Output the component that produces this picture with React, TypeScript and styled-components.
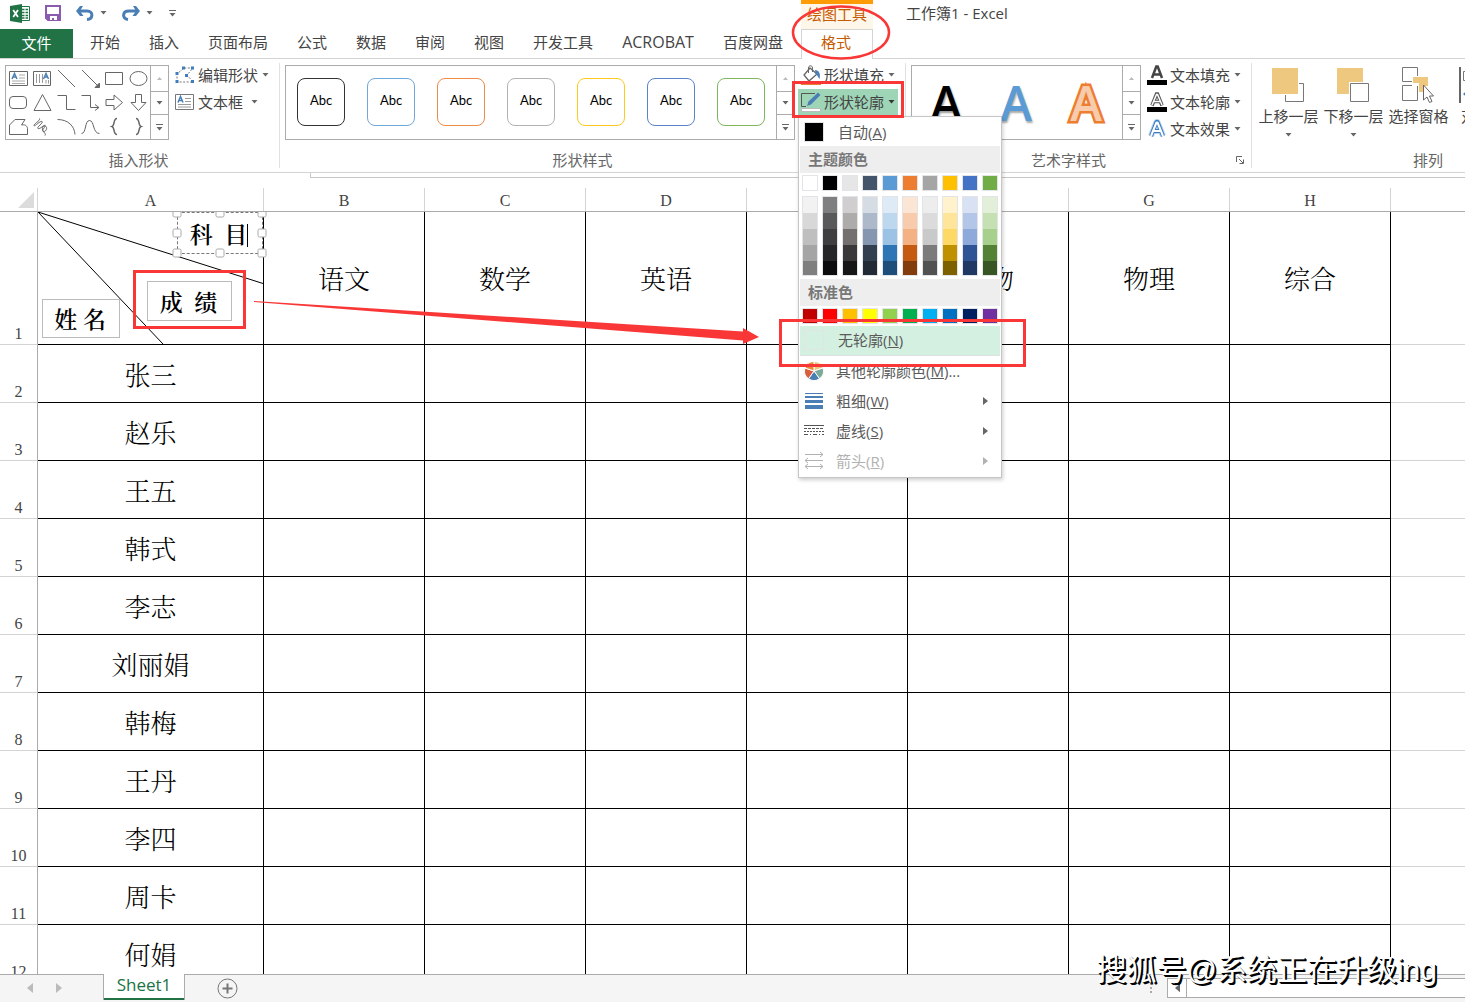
import React from 'react';
import styled, { createGlobalStyle, css } from 'styled-components';

const uiFont = `"Open Sans", "Noto Sans CJK SC", sans-serif`;
const sheetFont = `"Liberation Serif", "Noto Serif CJK SC", "Noto Sans CJK SC", serif`;

const GlobalStyle = createGlobalStyle`
  *, *::before, *::after { box-sizing: border-box; }
  body { margin: 0; background: #fff; font-family: ${uiFont}; }
  button { font: inherit; color: inherit; background: none; border: 0; padding: 0; margin: 0; }
  svg { display: block; flex: none; }
`;

const Window = styled.div`
  position: relative;
  display: flex;
  flex-direction: column;
  height: 100vh;
  overflow: hidden;
  font-size: 15px;
  line-height: 22px;
  color: #444;
  background: #fff;
`;

/* ---------- Title bar ---------- */

const TitleBar = styled.header`
  display: grid;
  grid-template-columns: 801px 72px 1fr;
  flex: none;
  height: 29px;
`;

const QuickAccess = styled.div`
  display: flex;
  align-items: center;
  gap: 15px;
  padding: 0 0 3px 10px;
`;

const QuickButton = styled.button`
  display: flex;
  align-items: center;
  gap: 6px;
`;

const ContextTitle = styled.div`
  border-top: 4px solid #ff9b05;
  background: #fff6ea;
  color: #c55a00;
  text-align: center;
  line-height: 20px;
  white-space: nowrap;
`;

const DocumentTitle = styled.div`
  padding: 2px 0 0 33px;
  white-space: nowrap;
`;

/* ---------- Ribbon tabs ---------- */

const TabRow = styled.nav`
  display: flex;
  flex: none;
  height: 30px;
  border-bottom: 1px solid #d4d4d4;
`;

const FileTab = styled.button`
  width: 73px;
  height: 29px;
  margin-right: 2px;
  padding-bottom: 2px;
  background: #217346;
  color: #fff;
`;

const Tab = styled.button<{ $active?: boolean; $latin?: boolean }>`
  padding: 0 14px 4px 15px;
  white-space: nowrap;
  font-size: ${(p) => (p.$latin ? '16px' : '15px')};
  ${(p) =>
    p.$active &&
    css`
      width: 72px;
      height: 30px;
      margin-left: 4px;
      padding: 0 2px 5px 0;
      border: 1px solid #d4d4d4;
      border-bottom: 0;
      background: #fff;
      color: #c55a00;
    `}
`;

/* ---------- Ribbon ---------- */

const Ribbon = styled.section`
  display: flex;
  flex: none;
  height: 114px;
  border-bottom: 1px solid #d4d4d4;
`;

const Group = styled.div`
  display: flex;
  flex-direction: column;
  flex: none;
  padding: 3px 7px 0 5px;
`;

const ArrangeGroup = styled(Group)`
  width: 352px;
  padding: 3px 4px 0;
`;

const Divider = styled.div`
  flex: none;
  width: 1px;
  margin: 4px 0;
  background: #e1e1e1;
`;

const GroupBody = styled.div`
  display: flex;
  height: 87px;
`;

const GroupLabel = styled.div<{ $inset?: number }>`
  display: flex;
  justify-content: center;
  align-items: center;
  padding-right: ${(p) => p.$inset ?? 0}px;
  color: #666;
`;

const LabelRow = styled.div`
  display: flex;
  align-items: center;
  & > :first-child { flex: 1; }
`;

const Gallery = styled.div`
  display: flex;
  height: 75px;
  margin-top: 3px;
  border: 1px solid #ababab;
`;

const ShapeGrid = styled.div`
  display: grid;
  grid-template-columns: repeat(6, 24px);
  grid-template-rows: repeat(3, 24px);
`;

const ShapeButton = styled.button`
  display: grid;
  place-items: center;
  padding-left: 1px;
`;

const StyleStrip = styled.div`
  display: flex;
  align-items: center;
  gap: 22px;
  padding: 0 11px 2px;
`;

const StyleTile = styled.button<{ $color: string }>`
  width: 48px;
  height: 48px;
  border: 1px solid ${(p) => p.$color};
  border-radius: 8px;
  font-family: Lato, sans-serif;
  font-size: 13px;
  line-height: 18px;
  color: #000;
  padding-bottom: 3px;
`;

const ArtStrip = styled.div`
  display: grid;
  grid-template-columns: repeat(3, 70px);
`;

const ArtButton = styled.button<{ $kind: 'black' | 'blue' | 'orange' }>`
  font-family: "Open Sans", sans-serif;
  font-size: 48px;
  font-weight: 600;
  line-height: 72px;
  padding-right: 2px;
  ${(p) => p.$kind === 'black' && css`color: #000; text-shadow: 1px 2px 2px #999;`}
  ${(p) => p.$kind === 'blue' && css`color: #5b9bd5; text-shadow: 1px 2px 2px #aaa;`}
  ${(p) =>
    p.$kind === 'orange' &&
    css`
      color: #f8cbad;
      -webkit-text-stroke: 5px #ed7d31;
      paint-order: stroke fill;
      stroke-linejoin: round;
    `}
`;

const ScrollColumn = styled.div`
  display: grid;
  grid-template-rows: 25px 23px 25px;
  width: 18px;
  border-left: 1px solid #ababab;
`;

const ScrollButton = styled.button`
  display: grid;
  place-items: center;
  & + & { border-top: 1px solid #ababab; }
`;

const SideColumn = styled.div`
  margin-left: 3px;
`;

const Anchor = styled.div`
  position: relative;
`;

const SideButton = styled.button<{ $pressed?: boolean }>`
  display: flex;
  align-items: center;
  height: 27px;
  padding: 0 3px 2px;
  white-space: pre;
  background: ${(p) => (p.$pressed ? '#9fd5b7' : 'transparent')};
  & > svg:first-child { margin-right: 3px; }
  & > svg:last-child { margin-left: 4px; }
`;

const LargeButton = styled.button<{ $narrow?: boolean }>`
  display: flex;
  flex: none;
  flex-direction: column;
  align-items: center;
  justify-content: flex-start;
  gap: 2px;
  width: ${(p) => (p.$narrow ? '50px' : '65px')};
  padding-top: 5px;
  white-space: nowrap;
  & > svg + svg { margin-top: 4px; }
`;

/* ---------- Outline menu ---------- */

const Menu = styled.div`
  position: absolute;
  z-index: 5;
  top: 100%;
  left: 0;
  width: 204px;
  padding: 0 1px 1px;
  border: 1px solid #c6c6c6;
  background: #fff;
  box-shadow: 1px 2px 4px rgba(0, 0, 0, 0.2);
`;

const MenuItem = styled.button<{ $selected?: boolean; $muted?: boolean; $first?: boolean }>`
  display: flex;
  align-items: center;
  width: 100%;
  height: ${(p) => (p.$first ? '29px' : '30px')};
  padding: ${(p) => (p.$first ? '1px 12px 0 4px' : '0 12px 1px 4px')};
  border-bottom: ${(p) => (p.$selected ? '1px solid #e1e1e1' : '0')};
  white-space: nowrap;
  background: ${(p) => (p.$selected ? '#d3f0e0' : 'transparent')};
  color: ${(p) => (p.$muted ? '#b1b1b1' : '#5a5a5a')};
  & > svg:last-child { margin-left: auto; }
`;

const MenuIcon = styled.span<{ $wide?: boolean }>`
  flex: none;
  width: ${(p) => (p.$wide ? '34px' : '32px')};
`;

const Chip = styled.span<{ $color: string }>`
  display: block;
  width: 20px;
  height: 20px;
  border: 1px solid #e2e4e7;
  background: ${(p) => p.$color};
`;

const MenuHeading = styled.div`
  height: 27px;
  padding-left: 8px;
  line-height: 26px;
  font-weight: 600;
  color: #777;
  background: #eee;
`;

const SwatchRow = styled.div`
  display: grid;
  grid-template-columns: repeat(10, 16px);
  column-gap: 4px;
  padding: 2px;
`;

const ShadeRow = styled(SwatchRow)`
  padding: 3px 2px;
`;

const Swatch = styled.button<{ $color: string }>`
  height: 16px;
  border: 1px solid #e2e4e7;
  background: ${(p) => p.$color};
`;

const ShadeStack = styled.div`
  display: grid;
  grid-template-rows: repeat(5, 16px);
  border: 1px solid #e2e4e7;
  height: 80px;
  overflow: hidden;
`;

const Shade = styled.button<{ $color: string }>`
  background: ${(p) => p.$color};
`;

/* ---------- Worksheet ---------- */

const FormulaEdge = styled.div`
  flex: none;
  height: 5px;
  margin-left: 310px;
  border-left: 1px solid #c6c6c6;
  border-bottom: 1px solid #c6c6c6;
`;

const SheetArea = styled.main`
  flex: 1;
  min-height: 0;
  overflow: hidden;
`;

const Grid = styled.table`
  width: 100%;
  table-layout: fixed;
  border-collapse: separate;
  border-spacing: 0;
  font-family: ${sheetFont};
`;

const ColumnHead = styled.th`
  height: 34px;
  padding: 12px 0 0;
  border-bottom: 1px solid #ababab;
  border-right: 1px solid transparent;
  border-image: linear-gradient(#fff 30%, #d4d4d4 31%, #d4d4d4 97%, #ababab 97%) 1;
  font-size: 16px;
  font-weight: 400;
  line-height: 20px;
  &:last-child { border-right: 0; border-image: none; }
`;

const Corner = styled(ColumnHead)`
  padding: 14px 3px 3px 18px;
`;

const RowHead = styled.th<{ $tall?: boolean }>`
  height: ${(p) => (p.$tall ? '133px' : '58px')};
  border-right: 1px solid #ababab;
  border-bottom: 1px solid #d4d4d4;
  padding: 0 0 1px;
  font-size: 16px;
  font-weight: 400;
  line-height: 18px;
  vertical-align: bottom;
`;

const Cell = styled.td<{ $outer?: boolean }>`
  position: relative;
  padding: 6px 0 0;
  border-right: ${(p) => (p.$outer ? '0' : '1px solid #000')};
  border-bottom: 1px solid ${(p) => (p.$outer ? '#d4d4d4' : '#000')};
  font-size: 26px;
  font-weight: 300;
  line-height: 34px;
  text-align: center;
  color: #000;
`;

const DrawingLayer = styled.svg`
  position: absolute;
  inset: 0;
`;

const TextShape = styled.div<{ $x: number; $y: number; $w: number; $h: number; $editing?: boolean }>`
  position: absolute;
  left: ${(p) => p.$x}px;
  top: ${(p) => p.$y}px;
  width: ${(p) => p.$w}px;
  height: ${(p) => p.$h}px;
  display: flex;
  align-items: center;
  justify-content: center;
  padding: 5px 2px 0 0;
  border: 1px ${(p) => (p.$editing ? 'dashed #777' : 'solid #bbb')};
  background: #fff;
  font-size: 23px;
  font-weight: 600;
  white-space: pre;
`;

const Caret = styled.span`
  width: 1px;
  height: 23px;
  background: #000;
`;

/* ---------- Sheet bar ---------- */

const SheetBar = styled.footer`
  display: flex;
  flex: none;
  height: 28px;
  background: #f5f5f5;
  box-shadow: inset 0 1px 0 #ababab;
`;

const SheetNav = styled.div`
  display: flex;
  align-items: center;
  gap: 23px;
  width: 103px;
  padding-left: 27px;
`;

const SheetTab = styled.button`
  width: 82px;
  height: 26px;
  border: 1px solid #ababab;
  border-width: 0 1px;
  box-shadow: inset 0 -2px 0 #217346;
  background: #fff;
  color: #217346;
  font-size: 17px;
  line-height: 20px;
  padding-bottom: 4px;
`;

const AddSheet = styled.button`
  margin-left: 32px;
`;

const ScrollArea = styled.div`
  display: flex;
  align-items: center;
  gap: 14px;
  width: 316px;
  margin-left: auto;
`;

const ScrollTrack = styled.div`
  display: flex;
  flex: 1;
  height: 20px;
  border: 1px solid #ababab;
  border-right: 0;
  background: #fff;
`;

const ScrollLeft = styled.button`
  display: grid;
  place-items: center;
  width: 19px;
  border-right: 1px solid #ababab;
`;

/* ---------- Overlays ---------- */

const Annotations = styled.svg`
  position: absolute;
  z-index: 10;
  inset: 0;
  pointer-events: none;
`;

const Watermark = styled.div`
  position: absolute;
  z-index: 11;
  right: 28px;
  bottom: 10px;
  font-family: "Liberation Sans", "Noto Sans CJK SC", sans-serif;
  font-size: 30px;
  line-height: 44px;
  color: #fff;
  text-shadow: 1px 1px 0 #000, 2px 2px 0 #000;
  white-space: nowrap;
`;

/* ---------- Icons ---------- */

const Down = ({ color = '#666' }: { color?: string }) => (
  <svg width="7" height="4" viewBox="0 0 7 4"><path d="M0.500 0h6L3.500 3.500z" fill={color} /></svg>
);

const Right = ({ color = '#666' }: { color?: string }) => (
  <svg width="5" height="8" viewBox="0 0 5 8"><path d="M0 0v8L5 4z" fill={color} /></svg>
);

const Left = ({ color = '#bbb', size = 6 }: { color?: string; size?: number }) => (
  <svg width={size} height="10" viewBox="0 0 6 10"><path d="M6 0v10L0 5z" fill={color} /></svg>
);

const More = () => (
  <svg width="9" height="7" viewBox="0 0 9 7">
    <path d="M1 0.5h7" stroke="#666" /><path d="M1.5 3h6L4.5 6.5z" fill="#666" />
  </svg>
);

const ExcelIcon = () => (
  <svg width="20" height="19" viewBox="0 0 20 19">
    <path d="M10 2.5h9.5v14H10z" fill="#fff" stroke="#217346" />
    <path d="M12 5.5h2.5M15.5 5.5H18M12 8.5h2.5M15.5 8.5H18M12 11.5h2.5M15.5 11.5H18M12 14h2.5M15.5 14H18" stroke="#217346" strokeWidth="1.5" />
    <path d="M0 2L12 0v19L0 17z" fill="#217346" />
    <path d="M3.2 6l4.8 7M8 6l-4.8 7" stroke="#fff" strokeWidth="1.8" />
  </svg>
);

const SaveIcon = () => (
  <svg width="16" height="16" viewBox="0 0 16 16">
    <path d="M1 1h14v14H3l-2-2z" fill="#fff" stroke="#8b5bb0" strokeWidth="2" />
    <path d="M2 9h12v6H2z" fill="#8b5bb0" />
    <path d="M5 11h7v4h-3v-2H7v2H5z" fill="#fff" />
  </svg>
);

const UndoIcon = () => (
  <svg width="18" height="15" viewBox="0 0 18 15">
    <path d="M2 5h9c7 0 6 8 0 8.500" fill="none" stroke="#4a7fb5" strokeWidth="3" />
    <path d="M7 0H4L0 5l4 5h3.500L4 5z" fill="#4a7fb5" />
  </svg>
);

const RedoIcon = () => (
  <svg width="18" height="15" viewBox="0 0 18 15">
    <path d="M16 5H7c-7 0-7 7.500-1 8.500" fill="none" stroke="#4a7fb5" strokeWidth="3" />
    <path d="M11 0h3l4 5-4 5h-3.500L14 5z" fill="#4a7fb5" />
  </svg>
);

const TextBoxIcon = () => (
  <svg width="20" height="16" viewBox="0 0 20 16">
    <path d="M0.5 0.500h18v15h-18z" fill="#fff" stroke="#777" />
    <path d="M10 4.500h6M10 7.500h6M3 10.500h13M3 13h13" stroke="#999" />
    <path d="M3 8.500L5.500 2.500 8 8.500M4 6.500h3" fill="none" stroke="#4a7fb5" strokeWidth="1.500" />
  </svg>
);

const shapePaths: React.ReactNode[] = [
  <g key="t"><path d="M0.500 2.500h18v14h-18z" /><path d="M10 6h6M10 9h6M3 12h13M3 14.500h13" stroke="#aaa" /><path d="M3 10l2.500-5.500L8 10M4 8h3" stroke="#4a7fb5" strokeWidth="1.500" /></g>,
  <g key="v"><path d="M0.500 2.500h17v14h-17z" /><path d="M3.500 5v9M6.500 5v9M9.500 5v9M13 11v3.500M15.500 11v3.500" stroke="#999" /><path d="M10.500 10L13 4.500l2.500 5.500M11.500 8h3" stroke="#4a7fb5" strokeWidth="1.500" /></g>,
  <path key="l" d="M1 1l17 17" />,
  <g key="a"><path d="M1 1l17 17" /><path d="M18.500 14v4.500H14z" fill="#666" /></g>,
  <path key="r" d="M0.500 3.500h17v12h-17z" />,
  <ellipse key="e" cx="9.500" cy="9.500" rx="8.500" ry="7" />,
  <rect key="rr" x="0.500" y="3.500" width="17" height="12" rx="3.500" />,
  <path key="tr" d="M9.500 1.500L18 17.500H1z" />,
  <path key="el" d="M0.500 2.500h9v14h9" />,
  <g key="ea"><path d="M0.500 2.500h9v12h8" /><path d="M14 11.500l4 3-4 3" /></g>,
  <path key="ra" d="M1 6.500h8V2l8.500 7.500L9 17v-4.500H1z" />,
  <path key="da" d="M6.500 1.500v8H2l7.500 8 7.500-8h-4.500v-8z" />,
  <path key="fr" d="M0.500 17.500V8L6 2.500h10L12.500 8c5-1 6 2 6 4v5.500z" />,
  <path key="sc" d="M6 1.500c3 1-5 5-5 7s6-5 8-4-6 6-4 7 6-4 7-3-4 5-2 6 5-3 3-5-5 1-3 4 3 4 2 5" />,
  <path key="ar" d="M0.500 2.500c11 0 17 7 17.500 15" />,
  <path key="cu" d="M0.500 16.500c5 0 3-13 8-13s3 13 10 13" />,
  <path key="lb" strokeWidth="1.500" d="M12 1.500c-4 0-2 7-5 8 3 1 1 8 5 8" />,
  <path key="rb" strokeWidth="1.500" d="M7 1.500c4 0 2 7 5 8-3 1-1 8-5 8" />,
];

const EditShapeIcon = () => (
  <svg width="20" height="18" viewBox="0 0 20 18">
    <path d="M2 16V8l7-6h9l-6 7 6 7z" fill="none" stroke="#777" strokeDasharray="2 1.500" />
    <path d="M7 0.500h3v3H7zM16 0.500h3v3h-3zM0.500 6h3v3h-3zM10 8h3v3h-3zM0.500 14h3v3h-3zM16 14h3v3h-3z" fill="#3f7dbf" />
  </svg>
);

const FillIcon = () => (
  <svg width="20" height="20" viewBox="0 0 20 20">
    <path d="M9 3l7 6-8 7-5-6z" fill="#fff" stroke="#666" strokeWidth="1.300" />
    <path d="M7.500 8V3c0-3 4-3 4 0v4" fill="none" stroke="#666" />
    <path d="M14 5c4 0 6 4 4.500 9-1-1-2-4-4-5z" fill="#4a7fb5" />
    <path d="M0 16h20v4H0z" fill="#ed7d31" />
  </svg>
);

const OutlineIcon = () => (
  <svg width="20" height="20" viewBox="0 0 20 20">
    <path d="M14 1.500H0.500v13H5" fill="none" stroke="#555" />
    <path d="M6 14l1.500-4.500L17 0.500l2.500 2.500L10 12.500z" fill="#4a7fb5" />
    <path d="M0.500 16.500h19v3H0.500z" fill="#fff" stroke="#bbb" />
  </svg>
);

const LetterA = ({ kind }: { kind: 'fill' | 'outline' | 'effect' }) => (
  <svg width="20" height="20" viewBox="0 0 20 20">
    {kind === 'fill' && <path d="M5 13L9.300 1.500h1.400L15 13M6.500 9.500h7" fill="none" stroke="#444" strokeWidth="2.500" />}
    {kind === 'outline' && (
      <g fill="none">
        <path d="M5 13.500L9.500 2h1L15 13.500M6.500 9.500h7" stroke="#555" strokeWidth="3.500" />
        <path d="M5 13L9.500 2.500h1L15 13M6.500 9.500h7" stroke="#fff" strokeWidth="1.500" />
      </g>
    )}
    {kind === 'effect' && (
      <g fill="none" strokeLinejoin="round">
        <path d="M4 17L9.500 3h1L16 17M6 12h8" stroke="#b5d3f0" strokeWidth="6" />
        <path d="M4 17L9.500 3h1L16 17M6 12h8" stroke="#3f7dbf" strokeWidth="4" />
        <path d="M4 17L9.500 3.500h1L16 17M6 12h8" stroke="#fff" strokeWidth="2" />
      </g>
    )}
    {kind !== 'effect' && <path d="M0 15h20v5H0z" fill="#000" />}
  </svg>
);

const ForwardIcon = () => (
  <svg width="36" height="36" viewBox="0 0 36 36">
    <path d="M14.500 16.500h18v18h-18z" fill="#fff" stroke="#777" />
    <path d="M0 0h28v28H0z" fill="#fff" /><path d="M1 1h26v26H1z" fill="#edc87e" />
  </svg>
);

const BackwardIcon = () => (
  <svg width="36" height="36" viewBox="0 0 36 36">
    <path d="M1 1h26v26H1z" fill="#edc87e" />
    <path d="M13 15h20v20H13z" fill="#fff" /><path d="M14.500 16.500h18v18h-18z" fill="#fff" stroke="#777" />
  </svg>
);

const SelectionIcon = () => (
  <svg width="36" height="36" viewBox="0 0 36 36">
    <path d="M1.500 0.500h15v14h-15zM1.500 18.500h15v15h-15z" fill="#fff" stroke="#777" />
    <path d="M11 9h18v10H11z" fill="#fff" /><path d="M12 10h15v9h-5v6h-4v-9h-6z" fill="#edc87e" />
    <path d="M22.500 18v15l3.500-3 2.500 5.500 2.500-1-2.500-5.500h4z" fill="#fff" stroke="#666" />
  </svg>
);

const AlignIcon = () => (
  <svg width="34" height="36" viewBox="0 0 34 36">
    <path d="M1 0v36" stroke="#666" strokeWidth="2" />
    <path d="M4.500 4.500h15v9h-15z" fill="#fff" stroke="#777" />
    <path d="M4 27l6-5v3h12v4H10v3z" fill="#3f7dbf" />
  </svg>
);

const PaletteIcon = () => (
  <svg width="20" height="20" viewBox="0 0 20 20">
    <g stroke="#fff">
      <path d="M10 10V0.500A9.500 9.500 0 0 1 19 7z" fill="#ecc27d" />
      <path d="M10 10l9-3a9.500 9.500 0 0 1-3.500 10.700z" fill="#7caa9a" />
      <path d="M10 10l5.500 7.700a9.500 9.500 0 0 1-11 0z" fill="#4a7fb5" />
      <path d="M10 10l-5.500 7.700A9.500 9.500 0 0 1 1 7z" fill="#d75f3f" />
      <path d="M10 10L1 7a9.500 9.500 0 0 1 9-6.500z" fill="#e58d3a" />
    </g>
  </svg>
);

const WeightIcon = () => (
  <svg width="20" height="18" viewBox="0 0 20 18">
    <path d="M1 1h18v1H1zM1 4h18v2H1zM1 8h18v3H1zM1 13h18v4H1z" fill="#4a7fb5" />
  </svg>
);

const DashIcon = () => (
  <svg width="20" height="14" viewBox="0 0 20 14">
    <path d="M0 1.500h20" stroke="#555" />
    <path d="M0 4.500h20" stroke="#555" strokeDasharray="3 1" />
    <path d="M0 7.500h20" stroke="#555" strokeDasharray="2 1" />
    <path d="M0 10.500h20" stroke="#555" strokeDasharray="4 2 1 2" />
  </svg>
);

const ArrowsIcon = () => (
  <svg width="20" height="20" viewBox="0 0 20 20">
    <path d="M1 3.500h18M16 1l3 2.500L16 6M1 9.500h18M4 7l-3 2.500L4 12M1 15.500h18M4 13l-3 2.500L4 18M16 13l3 2.500-3 2.500" fill="none" stroke="#b1b1b1" />
  </svg>
);

/* ---------- Data ---------- */

const tabs = ['开始', '插入', '页面布局', '公式', '数据', '审阅', '视图', '开发工具', 'ACROBAT', '百度网盘'];
const tileColors = ['#333', '#70a8da', '#ef8b49', '#b2b2b2', '#ffc91f', '#5a83cb', '#7fb75f'];
const themeColors = ['#ffffff', '#000000', '#e7e6e6', '#44546a', '#5b9bd5', '#ed7d31', '#a5a5a5', '#ffc000', '#4472c4', '#70ad47'];
const shades = [
  ['#f2f2f2', '#d8d8d8', '#bfbfbf', '#a5a5a5', '#7f7f7f'],
  ['#7f7f7f', '#595959', '#3f3f3f', '#262626', '#0c0c0c'],
  ['#d0cece', '#aeabab', '#757070', '#3a3838', '#171616'],
  ['#d6dce4', '#adb9ca', '#8496b0', '#323f4f', '#222a35'],
  ['#deebf6', '#bdd7ee', '#9cc3e5', '#2e75b5', '#1e4e79'],
  ['#fbe5d5', '#f7cbac', '#f4b183', '#c55a11', '#833c0b'],
  ['#ededed', '#dbdbdb', '#c9c9c9', '#7b7b7b', '#525252'],
  ['#fff2cc', '#fee599', '#ffd965', '#bf9000', '#7f6000'],
  ['#d9e2f3', '#b4c6e7', '#8eaadb', '#2f5496', '#1f3864'],
  ['#e2efd9', '#c5e0b3', '#a8d08d', '#538135', '#375623'],
];
const standardColors = ['#c00000', '#ff0000', '#ffc000', '#ffff00', '#92d050', '#00b050', '#00b0f0', '#0070c0', '#002060', '#7030a0'];
const columns = ['A', 'B', 'C', 'D', 'E', 'F', 'G', 'H'];
const subjects = ['语文', '数学', '英语', '', '生物', '物理', '综合'];
const students = ['张三', '赵乐', '王五', '韩式', '李志', '刘丽娟', '韩梅', '王丹', '李四', '周卡', '何娟'];

/* ---------- Parts ---------- */

const GalleryScroll = () => (
  <ScrollColumn>
    <ScrollButton aria-label="上一行"><svg width="5" height="3"><path d="M0 3h5L2.500 0z" fill="#bbb" /></svg></ScrollButton>
    <ScrollButton aria-label="下一行"><Down /></ScrollButton>
    <ScrollButton aria-label="其他"><More /></ScrollButton>
  </ScrollColumn>
);

const OutlineMenu = () => (
  <Menu>
    <MenuItem $first><MenuIcon $wide><Chip $color="#000" /></MenuIcon>自动(<u>A</u>)</MenuItem>
    <MenuHeading>主题颜色</MenuHeading>
    <SwatchRow>{themeColors.map((c) => <Swatch key={c} $color={c} aria-label={c} />)}</SwatchRow>
    <ShadeRow>
      {shades.map((stack, i) => (
        <ShadeStack key={i}>{stack.map((c) => <Shade key={c} $color={c} aria-label={c} />)}</ShadeStack>
      ))}
    </ShadeRow>
    <MenuHeading>标准色</MenuHeading>
    <SwatchRow>{standardColors.map((c) => <Swatch key={c} $color={c} aria-label={c} />)}</SwatchRow>
    <MenuItem $selected><MenuIcon $wide><Chip $color="transparent" /></MenuIcon>无轮廓(<u>N</u>)</MenuItem>
    <MenuItem><MenuIcon><PaletteIcon /></MenuIcon>其他轮廓颜色(<u>M</u>)...</MenuItem>
    <MenuItem><MenuIcon><WeightIcon /></MenuIcon>粗细(<u>W</u>)<Right /></MenuItem>
    <MenuItem><MenuIcon><DashIcon /></MenuIcon>虚线(<u>S</u>)<Right /></MenuItem>
    <MenuItem $muted disabled><MenuIcon><ArrowsIcon /></MenuIcon>箭头(<u>R</u>)<Right color="#b1b1b1" /></MenuItem>
  </Menu>
);

const handles = [[139, 1], [182, 1], [224, 1], [139, 21], [224, 21], [139, 41], [182, 41], [224, 41]];

const HeaderCell = () => (
  <Cell>
    <DrawingLayer width="225" height="132">
      <path d="M0 0L225 71.500M0 0L125 132" stroke="#000" fill="none" />
    </DrawingLayer>
    <TextShape $x={139} $y={0} $w={86} $h={42} $editing>科  目<Caret /></TextShape>
    <TextShape $x={109} $y={69} $w={85} $h={40}>成  绩</TextShape>
    <TextShape $x={4} $y={87} $w={78} $h={39}>姓 名</TextShape>
    <DrawingLayer width="230" height="132">
      {handles.map(([x, y]) => (
        <rect key={`${x}-${y}`} x={x - 4} y={y - 4} width="8" height="8" rx="1.500" fill="#fff" stroke="#aaa" />
      ))}
    </DrawingLayer>
  </Cell>
);

export default function App() {
  return (
    <Window>
      <GlobalStyle />
      <TitleBar>
        <QuickAccess>
          <ExcelIcon />
          <QuickButton aria-label="保存"><SaveIcon /></QuickButton>
          <QuickButton aria-label="撤消"><UndoIcon /><Down /></QuickButton>
          <QuickButton aria-label="恢复"><RedoIcon /><Down /></QuickButton>
          <QuickButton aria-label="自定义"><More /></QuickButton>
        </QuickAccess>
        <ContextTitle>绘图工具</ContextTitle>
        <DocumentTitle>工作簿1 - Excel</DocumentTitle>
      </TitleBar>

      <TabRow>
        <FileTab>文件</FileTab>
        {tabs.map((t) => <Tab key={t} $latin={/^[A-Z]+$/.test(t)}>{t}</Tab>)}
        <Tab $active>格式</Tab>
      </TabRow>

      <Ribbon>
        <Group>
          <GroupBody>
            <Gallery>
              <ShapeGrid>
                {shapePaths.map((shape, i) => (
                  <ShapeButton key={i} aria-label={`形状 ${i + 1}`}>
                    <svg width="19" height="19" viewBox="0 0 19 19" fill="none" stroke="#666">{shape}</svg>
                  </ShapeButton>
                ))}
              </ShapeGrid>
              <GalleryScroll />
            </Gallery>
            <SideColumn>
              <SideButton><EditShapeIcon />编辑形状<Down /></SideButton>
              <SideButton><TextBoxIcon />文本框 <Down /></SideButton>
            </SideColumn>
          </GroupBody>
          <GroupLabel>插入形状</GroupLabel>
        </Group>
        <Divider />
        <Group>
          <GroupBody>
            <Gallery>
              <StyleStrip>
                {tileColors.map((c) => <StyleTile key={c} $color={c}>Abc</StyleTile>)}
              </StyleStrip>
              <GalleryScroll />
            </Gallery>
            <SideColumn>
              <SideButton><FillIcon />形状填充<Down /></SideButton>
              <Anchor>
                <SideButton $pressed><OutlineIcon />形状轮廓<Down color="#333" /></SideButton>
                <OutlineMenu />
              </Anchor>
            </SideColumn>
          </GroupBody>
          <GroupLabel $inset={18}>形状样式</GroupLabel>
        </Group>
        <Divider />
        <Group>
          <GroupBody>
            <Gallery>
              <ArtStrip>
                <ArtButton $kind="black">A</ArtButton>
                <ArtButton $kind="blue">A</ArtButton>
                <ArtButton $kind="orange">A</ArtButton>
              </ArtStrip>
              <GalleryScroll />
            </Gallery>
            <SideColumn>
              <SideButton><LetterA kind="fill" />文本填充<Down /></SideButton>
              <SideButton><LetterA kind="outline" />文本轮廓<Down /></SideButton>
              <SideButton><LetterA kind="effect" />文本效果<Down /></SideButton>
            </SideColumn>
          </GroupBody>
          <LabelRow>
            <GroupLabel $inset={10}>艺术字样式</GroupLabel>
            <button aria-label="设置文本效果格式">
              <svg width="8" height="8" viewBox="0 0 8 8">
                <path d="M0.500 6V0.500H6M3 3l4 4M7.500 3.500v4h-4" fill="none" stroke="#666" />
              </svg>
            </button>
          </LabelRow>
        </Group>
        <Divider />
        <ArrangeGroup>
          <GroupBody>
            <LargeButton><ForwardIcon />上移一层<Down /></LargeButton>
            <LargeButton><BackwardIcon />下移一层<Down /></LargeButton>
            <LargeButton><SelectionIcon />选择窗格</LargeButton>
            <LargeButton $narrow><AlignIcon />对齐<Down /></LargeButton>
          </GroupBody>
          <GroupLabel>排列</GroupLabel>
        </ArrangeGroup>
      </Ribbon>
      <FormulaEdge />

      <SheetArea>
        <Grid>
          <colgroup>
            <col width="38" />
            <col width="226" />
            {columns.slice(1).map((c) => <col key={c} width="161" />)}
            <col />
          </colgroup>
          <thead>
            <tr>
              <Corner aria-label="全选"><svg width="16" height="16"><path d="M16 0v16H0z" fill="#dcdcdc" /></svg></Corner>
              {columns.map((c) => <ColumnHead key={c} scope="col">{c}</ColumnHead>)}
              <ColumnHead />
            </tr>
          </thead>
          <tbody>
            <tr>
              <RowHead scope="row" $tall>1</RowHead>
              <HeaderCell />
              {subjects.map((s, i) => <Cell key={i}>{s}</Cell>)}
              <Cell $outer />
            </tr>
            {students.map((name, i) => (
              <tr key={name}>
                <RowHead scope="row">{i + 2}</RowHead>
                <Cell>{name}</Cell>
                {subjects.map((_, j) => <Cell key={j} />)}
                <Cell $outer />
              </tr>
            ))}
          </tbody>
        </Grid>
      </SheetArea>

      <SheetBar>
        <SheetNav>
          <button aria-label="上一个工作表"><Left /></button>
          <button aria-label="下一个工作表"><svg width="6" height="10"><path d="M0 0v10l6-5z" fill="#bbb" /></svg></button>
        </SheetNav>
        <SheetTab>Sheet1</SheetTab>
        <AddSheet aria-label="新工作表">
          <svg width="21" height="21" viewBox="0 0 21 21">
            <circle cx="10.500" cy="10.500" r="9.500" fill="none" stroke="#777" />
            <path d="M5.500 10.500h10M10.500 5.500v10" stroke="#777" strokeWidth="2" />
          </svg>
        </AddSheet>
        <ScrollArea>
          <svg width="4" height="12"><path d="M1 1h2v2H1zM1 5h2v2H1zM1 9h2v2H1z" fill="#aaa" /></svg>
          <ScrollTrack><ScrollLeft aria-label="向左滚动"><Left color="#666" size={5} /></ScrollLeft></ScrollTrack>
        </ScrollArea>
      </SheetBar>

      <Annotations width="1465" height="1002" viewBox="0 0 1465 1002" fill="none" stroke="#fa3737" strokeWidth="3">
        <ellipse cx="841" cy="32.500" rx="48" ry="26" strokeWidth="2.500" />
        <rect x="793.500" y="82.500" width="109" height="34" />
        <rect x="134.500" y="271.500" width="110" height="56" />
        <rect x="780.500" y="320.500" width="244" height="45" />
        <path d="M254 301L743 331.500V328l16 9-16 7v-3.500L254 302z" fill="#fa3737" stroke="none" />
      </Annotations>
      <Watermark>搜狐号@系统正在升级ing</Watermark>
    </Window>
  );
}
